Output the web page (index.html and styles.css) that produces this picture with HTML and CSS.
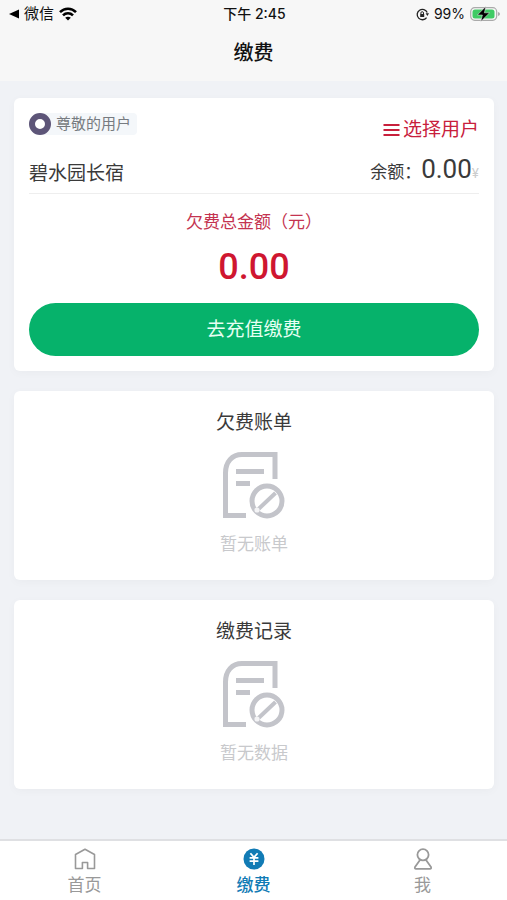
FILE: index.html
```html
<!DOCTYPE html>
<html lang="zh-CN">
<head>
    <meta charset="UTF-8">
    <meta name="viewport" content="width=device-width, initial-scale=1.0">
    <title>缴费</title>
    <link rel="stylesheet" href="styles.css">
</head>
<body>
    <header class="header">
        <div class="status-bar">
            <div class="status-left">
                <svg width="10" height="10" viewBox="0 0 10 10"><path d="M0 5L10 0.5V9.5Z"/></svg>
                <span>微信</span>
                <svg class="wifi" width="18" height="14" viewBox="0 0 18 14" fill="none" stroke="#000" stroke-width="2.6">
                    <path d="M1 5.2C5.5 0.6 12.5 0.6 17 5.2"/>
                    <path d="M4 8.3C6.8 5.5 11.2 5.5 14 8.3"/>
                    <path d="M9 13.5L6.2 10.7C7.8 9.3 10.2 9.3 11.8 10.7Z" fill="#000" stroke="none"/>
                </svg>
            </div>
            <div class="status-time">下午 2:45</div>
            <div class="status-right">
                <svg width="13" height="13" viewBox="0 0 13 13" fill="none" stroke="#222" stroke-width="1.3">
                    <path d="M10.6 9.6A5.2 5.2 0 1 1 11.2 4.6"/>
                    <path d="M9.6 5.3H13L11.4 8Z" fill="#222" stroke="none"/>
                    <rect x="4.2" y="6" width="4" height="3" fill="#222" stroke="none"/>
                    <path d="M4.9 6V5A1.3 1.3 0 0 1 7.5 5V6" stroke-width="1"/>
                </svg>
                <span>99%</span>
                <svg width="30" height="16" viewBox="0 0 30 16">
                    <rect x="0.7" y="1.7" width="26" height="12.6" rx="4" fill="#f7f7f7" stroke="#aaa" stroke-width="1.2"/>
                    <rect x="2.5" y="3.5" width="22" height="9" rx="2.5" fill="#3fcb64"/>
                    <path d="M28.2 6V10Q29.8 9.4 29.8 8T28.2 6Z" fill="#999"/>
                    <path d="M15.8 0.5L7.4 9H12.4L10.8 15.5L19.6 6.8H14.4Z" stroke="#f7f7f7" stroke-width="0.5"/>
                </svg>
            </div>
        </div>
        <h1>缴费</h1>
    </header>

    <main class="content">
        <section class="card account">
            <div class="account-top">
                <div class="user-tag">
                    <span class="avatar"></span>
                    <span class="user-name">尊敬的用户</span>
                </div>
                <button type="button" class="select-user">
                    <svg width="17" height="14" viewBox="0 0 17 14" stroke="#c8203c" stroke-width="2"><path d="M0.5 2H16.5M0.5 7H16.5M0.5 12H16.5"/></svg>
                    选择用户
                </button>
            </div>
            <div class="account-info">
                <span class="place">碧水园长宿</span>
                <span class="balance">余额：<b>0.00</b><small>¥</small></span>
            </div>
            <p class="debt-label">欠费总金额（元）</p>
            <p class="debt-amount">0.00</p>
            <button type="button" class="pay">去充值缴费</button>
        </section>

        <section class="card list">
            <h2>欠费账单</h2>
            <svg class="empty-icon" width="64" height="68" viewBox="0 0 64 68" fill="none" stroke="#c3c4ca" stroke-width="5">
                <path d="M24 64.5H3.5V22C3.5 11 10 3.5 20 3.5H53V28"/>
                <path d="M14 20.5H42M14 32.5H28"/>
                <circle cx="45" cy="50" r="15"/>
                <path d="M36 58.5L53.5 42" stroke-width="4"/>
                <circle cx="35" cy="59" r="2.6" fill="#f4f4f6" stroke="none"/>
            </svg>
            <p>暂无账单</p>
        </section>

        <section class="card list">
            <h2>缴费记录</h2>
            <svg class="empty-icon" width="64" height="68" viewBox="0 0 64 68" fill="none" stroke="#c3c4ca" stroke-width="5">
                <path d="M24 64.5H3.5V22C3.5 11 10 3.5 20 3.5H53V28"/>
                <path d="M14 20.5H42M14 32.5H28"/>
                <circle cx="45" cy="50" r="15"/>
                <path d="M36 58.5L53.5 42" stroke-width="4"/>
                <circle cx="35" cy="59" r="2.6" fill="#f4f4f6" stroke="none"/>
            </svg>
            <p>暂无数据</p>
        </section>
    </main>

    <nav class="tab-bar">
        <a href="#home">
            <svg width="22" height="22" viewBox="0 0 22 22" fill="none" stroke="#999" stroke-width="1.6" stroke-linejoin="round"><path d="M1.5 20.5V6.5L11 1.3L20.5 6.5V20.5H13.6V14.5H8.4V20.5Z"/></svg>
            <span>首页</span>
        </a>
        <a href="#pay" class="active">
            <svg width="22" height="22" viewBox="0 0 22 22" fill="none" stroke="#fff" stroke-width="1.7">
                <circle cx="11" cy="11" r="10.5" fill="#117bb5" stroke="none"/>
                <path d="M7.4 5.2L11 9.4L14.6 5.2M11 9V17M6.6 9.9H15.4M6.6 13.1H15.4"/>
            </svg>
            <span>缴费</span>
        </a>
        <a href="#me">
            <svg width="22" height="22" viewBox="0 0 22 22" fill="none" stroke="#999" stroke-width="1.8" stroke-linejoin="round">
                <circle cx="11" cy="6.8" r="5.6"/>
                <path d="M8 12L3 19Q2.4 20.9 4 20.9H18Q19.6 20.9 19 19L14 12"/>
            </svg>
            <span>我</span>
        </a>
    </nav>
</body>
</html>
```

FILE: styles.css
```css
* {
    box-sizing: border-box;
}

body {
    margin: 0;
    min-height: 100vh;
    display: flex;
    flex-direction: column;
    background: #f0f2f6;
    color: #3a3a3a;
    font-family: Inter, "Noto Sans CJK SC", sans-serif;
}

h1, h2, p {
    margin: 0;
    font-weight: 400;
}

button {
    border: none;
    padding: 0;
    background: none;
    font-family: inherit;
    cursor: pointer;
}

svg {
    flex: none;
}

.header {
    height: 81px;
    background: #f7f7f7;
    color: #111;
}

.status-bar {
    display: grid;
    grid-template-columns: 1fr auto 1fr;
    align-items: center;
    height: 28px;
    padding: 0 7px 0 9px;
    font-size: 14px;
    line-height: 20px;
}

.status-left,
.status-right {
    display: flex;
    align-items: center;
    gap: 5px;
}

.status-left {
    font-size: 15px;
}

.status-right {
    justify-content: flex-end;
}

.status-time {
    font-weight: 500;
}

.header h1 {
    font-size: 20px;
    line-height: 50px;
    font-weight: 500;
    text-align: center;
}

.content {
    flex: 1;
    display: flex;
    flex-direction: column;
    gap: 20px;
    padding: 17px 13px 48px 14px;
}

.card {
    background: #fff;
    border-radius: 6px;
    box-shadow: 0 2px 10px rgba(0, 0, 0, 0.03);
}

.account {
    padding: 15px;
}

.account-top {
    display: flex;
    justify-content: space-between;
    align-items: flex-start;
}

.user-tag {
    display: flex;
    align-items: center;
    height: 22px;
    border-radius: 11px 4px 4px 11px;
    background: #f4f7fa;
}

.avatar {
    width: 22px;
    height: 22px;
    border: 6px solid #5d5578;
    border-radius: 50%;
    background: #fff;
}

.user-name {
    padding: 0 6px 0 5px;
    font-size: 15px;
    line-height: 20px;
    color: #777b80;
}

.select-user {
    display: flex;
    align-items: center;
    gap: 3px;
    font-size: 19px;
    line-height: 34px;
    color: #c8203c;
}

.account-info {
    display: flex;
    justify-content: space-between;
    align-items: center;
    height: 47px;
    padding-top: 2px;
    border-bottom: 1px solid #eee;
}

.place {
    font-size: 19px;
}

.balance {
    font-size: 17px;
    line-height: 32px;
}

.balance b {
    font-family: Roboto, sans-serif;
    font-size: 26px;
    font-weight: 400;
}

.balance small {
    font-size: 13px;
    color: #ccc;
}

.debt-label {
    margin-top: 15px;
    font-size: 17px;
    line-height: 26px;
    text-align: center;
    color: #c43350;
}

.debt-amount {
    margin: 8px 0 12px;
    font-family: Roboto, sans-serif;
    font-size: 36px;
    font-weight: 500;
    line-height: 48px;
    text-align: center;
    color: #cf1630;
}

.pay {
    display: block;
    width: 100%;
    height: 53px;
    border-radius: 27px;
    background: #06b26b;
    color: #e6fff3;
    font-size: 19px;
    line-height: 50px;
}

.list {
    display: flex;
    flex-direction: column;
    align-items: center;
    padding: 16px 0 23px;
}

.list h2 {
    font-size: 19px;
    line-height: 32px;
}

.empty-icon {
    margin: 12px 0 13px;
}

.list p {
    font-size: 17px;
    line-height: 25px;
    color: #c8c9cc;
}

.tab-bar {
    display: flex;
    height: 61px;
    border-top: 2px solid #dfe0e3;
    background: #fff;
}

.tab-bar a {
    flex: 1;
    display: flex;
    flex-direction: column;
    align-items: center;
    padding-top: 7px;
    font-size: 17px;
    line-height: 30px;
    text-decoration: none;
    color: #999;
}

.tab-bar .active {
    font-weight: 500;
    color: #117bb5;
}
```
